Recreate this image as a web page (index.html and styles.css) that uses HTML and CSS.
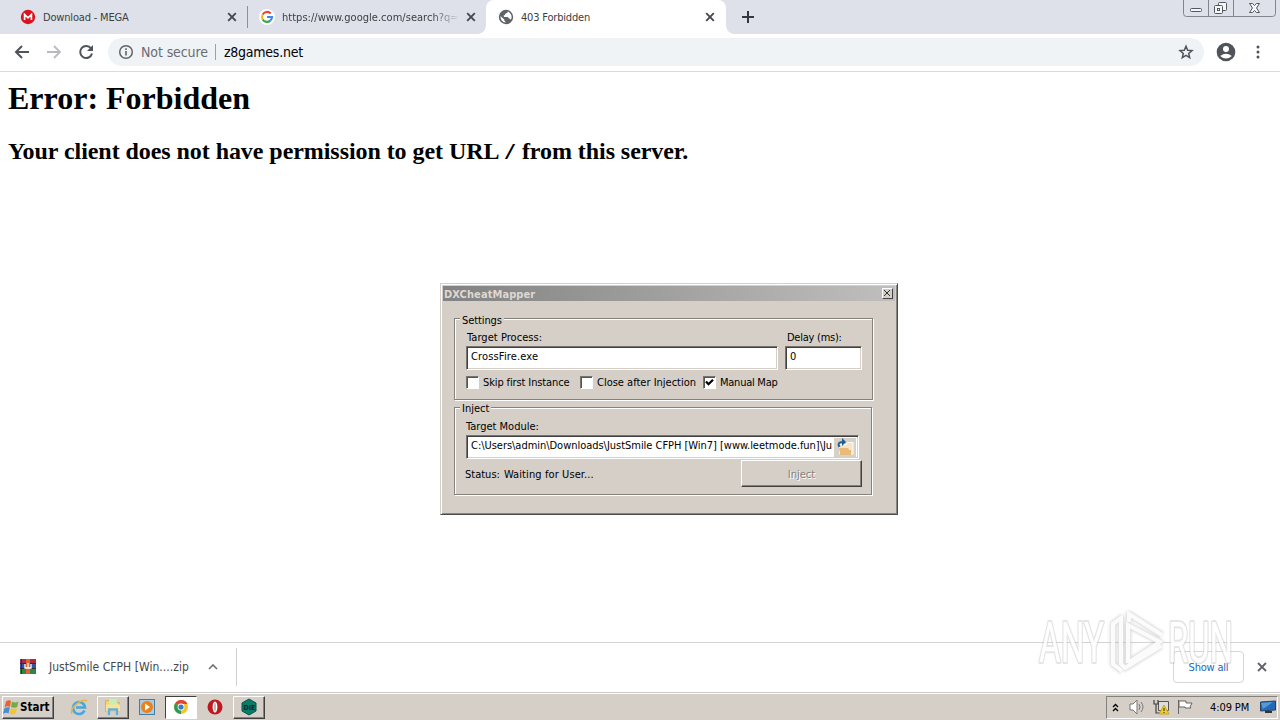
FILE: index.html
```html
<!DOCTYPE html>
<html lang="en">
<head>
<meta charset="utf-8">
<title>403 Forbidden</title>
<link rel="stylesheet" href="styles.css">
</head>
<body>
<header class="tabs">
  <div class="tab first">
    <svg class="fav" viewBox="0 0 16 16"><circle cx="8" cy="8" r="7.2" fill="#d9141e"/><path d="M4.6 11V5.5L8 8.8l3.4-3.3V11" fill="none" stroke="#fff" stroke-width="1.7"/></svg>
    <span class="label t1">Download - MEGA</span>
    <svg class="x" viewBox="0 0 10 10"><path d="M1.2 1.2l7.6 7.6m0-7.6L1.2 8.8"/></svg>
  </div>
  <div class="tab second">
    <svg class="fav" viewBox="0 0 16 16"><circle cx="8" cy="8" r="8" fill="#fff"/><g fill="none" stroke-width="2.2"><path d="M3.7 5.5A5 5 0 0 1 11.7 4.5" stroke="#ea4335"/><path d="M3.7 5.5a5 5 0 0 0 0 5" stroke="#fbbc05"/><path d="M3.7 10.5a5 5 0 0 0 7.6 1.2" stroke="#34a853"/><path d="M8 8h5a5 5 0 0 1-1.7 3.7" stroke="#4285f4"/></g></svg>
    <span class="label t2">https://www.google.com/search?q=</span>
    <svg class="x" viewBox="0 0 10 10"><path d="M1.2 1.2l7.6 7.6m0-7.6L1.2 8.8"/></svg>
  </div>
  <div class="tab active">
    <svg class="fav" viewBox="0 0 16 16"><circle cx="8" cy="8" r="7.2" fill="#5f6368"/><path d="M9.800 2.600Q9.800 4.500 7.500 4.600 7.300 6.400 5.600 6.600L6 8h3.500q1.300.2 1.300 1.600 1.500 0 2 1.200A5.600 5.600 0 0 0 9.800 2.600zM2.600 7.200L6.300 10.600V11.800q1.200.2 1.200 1.800A5.600 5.600 0 0 1 2.600 7.200z" fill="#fff"/></svg>
    <span class="label t3">403 Forbidden</span>
    <svg class="x" viewBox="0 0 10 10"><path d="M1.2 1.2l7.6 7.6m0-7.6L1.2 8.8"/></svg>
  </div>
  <svg class="plus" viewBox="0 0 12 12"><path d="M6 0v12M0 6h12" stroke="#34373c" stroke-width="2"/></svg>
  <svg class="controls" viewBox="0 0 94 18"><path d="M.5 0v13.500q0 3 3 3h86q3 0 3-3V0M25.500 0v16M50.500 0v16" fill="none" stroke="#80868e"/><g fill="#f4f6fa" stroke="#53575e"><rect x="7.500" y="8.500" width="11" height="3" rx="1"/><rect x="35.500" y="2.500" width="8" height="8" rx="1"/><rect x="31.500" y="5.500" width="8" height="8" rx="1"/><rect x="34.500" y="8.500" width="2" height="2"/><path d="M66.500 3.500h3l2 2 2-2h3L73.500 8l3 4.500h-3l-2-2-2 2h-3L69.500 8z"/></g></svg>
</header>
<nav class="toolbar">
  <svg class="back" viewBox="0 0 16 16"><path d="M15 8H2m6-6L2 8l6 6" fill="none" stroke="#505359" stroke-width="2"/></svg>
  <svg class="fwd" viewBox="0 0 16 16"><path d="M1 8h13M8 2l6 6-6 6" fill="none" stroke="#b8babd" stroke-width="1.800"/></svg>
  <svg class="reload" viewBox="0 0 16 16"><path d="M13 4.400A6 6 0 1 0 14 9.500" fill="none" stroke="#505359" stroke-width="2"/><path d="M15 1v6H9z" fill="#505359"/></svg>
  <div class="omnibox">
    <svg class="info" viewBox="0 0 16 16"><circle cx="8" cy="8" r="6.300" fill="none" stroke="#5f6368" stroke-width="1.500"/><path d="M8 7v4.500M8 4.300v1.600" stroke="#5f6368" stroke-width="1.600"/></svg>
    <span class="unsafe">Not secure</span><span class="bar"></span><span class="url">z8games.net</span>
    <svg class="star" viewBox="0 0 16 16"><path d="M8 2.200l1.700 4 4.300.4-3.300 2.800 1 4.200L8 11.400l-3.700 2.200 1-4.200L2 6.600l4.300-.4z" fill="none" stroke="#505359" stroke-width="1.500"/></svg>
  </div>
  <svg class="user" viewBox="0 0 20 20"><circle cx="10" cy="10" r="9.300" fill="#505359"/><circle cx="10" cy="7" r="3" fill="#fff"/><path d="M4.200 14Q10 9.500 15.800 14 10 19 4.200 14z" fill="#fff"/></svg>
  <svg class="dots" viewBox="0 0 4 14"><g fill="#505359"><circle cx="2" cy="2" r="1.500"/><circle cx="2" cy="7" r="1.500"/><circle cx="2" cy="12" r="1.500"/></g></svg>
</nav>
<main class="page">
  <h1>Error: Forbidden</h1>
  <h2>Your client does not have permission to get URL <code>/</code> from this server.</h2>
  <section class="dialog">
    <div class="titlebar"><span class="title">DXCheatMapper</span><span class="close"><svg viewBox="0 0 8 8"><path d="M1 1l6 6m0-6L1 7" stroke="#333" stroke-width="1"/></svg></span></div>
    <div class="group settings">
      <span class="legend lg1">Settings</span>
      <div class="fields">
        <div class="process"><label class="lp">Target Process:</label><div class="input"><span class="exe">CrossFire.exe</span></div></div>
        <div class="delay"><label class="ld">Delay (ms):</label><div class="input">0</div></div>
      </div>
      <div class="checks">
        <span class="box"></span><span class="c1">Skip first Instance</span>
        <span class="box"></span><span class="c2">Close after Injection</span>
        <span class="box"><svg viewBox="0 0 9 9"><path d="M1 3.500l2.500 2.700L8 1.700" fill="none" stroke="#000" stroke-width="2.200"/></svg></span><span class="c3">Manual Map</span>
      </div>
    </div>
    <div class="group inject">
      <span class="legend lg2">Inject</span>
      <label class="lm">Target Module:</label>
      <div class="input module"><span class="path">C:\Users\admin\Downloads\JustSmile CFPH [Win7] [www.leetmode.fun]\Ju</span>
        <svg class="open" viewBox="0 0 22 19"><rect width="22" height="19" fill="#d6d0c8"/><path d="M5.500 16V6.500H12l1.500-2H19V16z" fill="#f7e4c6" stroke="#fff"/><path d="M5 10h9l1 2h2v5H6z" fill="#eabb76"/><path d="M5.500 9Q2.500 4 9 4" fill="none" stroke="#205f91" stroke-width="2"/><path d="M8 0l4 4-4 4z" fill="#205f91"/></svg></div>
      <div class="bottom"><span class="status">Status:</span><span class="wait">Waiting for User...</span><span class="btn">Inject</span></div>
    </div>
  </section>
</main>
<footer class="downloads">
  <svg class="rar" viewBox="0 0 16 15"><path fill="#9c3158" d="M0 0h16v5H0z"/><path fill="#35579b" d="M0 5h16v5H0z"/><path fill="#2f8545" d="M0 10h16v5H0z"/><path d="M0 4.500h16M0 9.500h16M1.500 0v15" stroke="#322c35"/><path fill="#e5632a" d="M6 0h4v15H6z"/><path d="M5 5v4h6V5M8 4v5" fill="none" stroke="#fff" stroke-width="1.300"/><path fill="#b4292e" d="M12 0h3v4h-3z"/></svg>
  <span class="zip">JustSmile CFPH [Win....zip</span>
  <svg class="chev" viewBox="0 0 10 6"><path d="M1 5l4-4 4 4" fill="none" stroke="#6b6e72" stroke-width="1.600"/></svg>
  <span class="rule"></span>
  <span class="showall">Show all</span>
  <svg class="bx" viewBox="0 0 10 10"><path d="M1 1l8 8m0-8L1 9" stroke="#5f6368" stroke-width="1.800"/></svg>
  <svg class="watermark" viewBox="0 0 210 76">
    <path class="halo" d="M96 60V22l32 17-32 21M90 68l-9-7V21l8-6v46l4 4 36-22M97 19V11l33 21"/>
    <path class="core" d="M96 60V22l32 17-32 21M90 68l-9-7V21l8-6v46l4 4 36-22M97 19V11l33 21"/>
    <text x="7" y="59" textLength="65" lengthAdjust="spacingAndGlyphs">ANY</text><text x="136" y="59" textLength="65" lengthAdjust="spacingAndGlyphs">RUN</text>
  </svg>
</footer>
<div class="taskbar">
  <div class="start"><svg viewBox="0 0 16 15"><path d="M3 1.500q3-2 5-.5L7 7Q4.500 5.500 1.500 7.500z" fill="#eb6130"/><path d="M9 1.500q3 2 6.500 0l-1.300 5.500q-3 1.500-6.200 0z" fill="#70ad46"/><path d="M1.300 8.500q3-2 5.500-1l-1.300 6q-2.500-1.500-5.500.5z" fill="#468dd1"/><path d="M7.800 8q3 2 6.200 0l-1.300 5.500q-3 2-6.200 0z" fill="#f6c338"/></svg><b>Start</b></div>
  <span class="task"><svg viewBox="0 0 18 18"><path d="M14.500 12.500A6 6 0 1 1 15 9.500H6" fill="none" stroke="#46a8df" stroke-width="2.600"/><path d="M2 16C-1 10 12 0 17 3" fill="none" stroke="#e4b63d" stroke-width="1.500"/></svg></span>
  <span class="task raised"><svg viewBox="0 0 18 18"><path d="M1.500 2.500h5l1 2h8v9h-14z" fill="#f1d477" stroke="#d7b355"/><path d="M5 1h8v6H5z" fill="#c9edb6"/><path d="M2 6.500h14v7H2z" fill="#f8e39a"/><path d="M5 17v-5.500h8V17" fill="none" stroke="#69aed0" stroke-width="2.300"/></svg></span>
  <span class="task"><svg viewBox="0 0 18 18"><rect x="1.500" y="1.500" width="15" height="15" fill="#a9cbe3" stroke="#457da9"/><circle cx="9" cy="9" r="6" fill="#ed8119"/><path d="M7 5.500l5 3.500-5 3.500z" fill="#fff"/></svg></span>
  <span class="task pressed"><svg viewBox="0 0 18 18"><circle cx="9" cy="9" r="7" fill="#f3c431"/><path d="M9 9L3 5.500A7 7 0 0 1 15.500 6H9z" fill="#dd4637"/><path d="M3 5.500L9 9v7A7 7 0 0 1 3 5.500z" fill="#2c9b52"/><circle cx="9" cy="9" r="3.400" fill="#fff"/><circle cx="9" cy="9" r="2.600" fill="#3979cf"/></svg></span>
  <span class="task"><svg viewBox="0 0 18 18"><circle cx="9" cy="9" r="7.500" fill="#bd1a20"/><ellipse cx="9" cy="9" rx="2.400" ry="5.500" fill="#fff"/><ellipse cx="9" cy="9" rx=".8" ry="4.500" fill="#b6a7a7"/></svg></span>
  <span class="task raised"><svg viewBox="0 0 18 18"><path d="M9 1l7 4v8l-7 4-7-4V5z" fill="#087c68" stroke="#075347"/><text x="3.500" y="11.500" font-size="7" font-weight="bold" fill="#092e2b">DIE</text></svg></span>
  <div class="tray">
    <svg class="up2" viewBox="0 0 7 9"><path d="M1 4l2.500-2.500L6 4M1 8l2.500-2.500L6 8" fill="none" stroke="#000" stroke-width="1.300"/></svg>
    <svg class="snd" viewBox="0 0 16 16"><path d="M1 5h3l4-4v14l-4-4H1z" fill="#fff" stroke="#777"/><path d="M10 5q2 3 0 6m2-8q4 5 0 10" fill="none" stroke="#777"/></svg>
    <svg class="net" viewBox="0 0 17 16"><path d="M5.500 2.500h10v9h-10z" fill="#ddd" stroke="#555"/><path d="M1 1v4h4V1M3 5v9h4" fill="none" stroke="#444" stroke-width="1.200"/><path d="M11 6l5 9H6z" fill="#f4cd25" stroke="#cda519"/><path d="M11 9v3m0 1v1" stroke="#222"/></svg>
    <svg class="flag" viewBox="0 0 16 16"><path d="M1.500 1v14M2 2h7v2h6l-2 4 1 1H8V8H2z" fill="#fff" stroke="#666"/></svg>
    <span class="clock">4:09 PM</span>
    <svg class="desk" viewBox="0 0 16 14"><path d="M.5 2l15-1v9l-15 1z" fill="#2468b8" stroke="#244367"/><path d="M1 3l12-1L3 9z" fill="#5898d9"/><path d="M5 12h7" stroke="#333" stroke-width="2"/></svg>
  </div>
</div>
</body>
</html>
```
FILE: styles.css
```css
*{box-sizing:border-box}
body{margin:0;width:1280px;height:720px;display:flex;flex-direction:column;overflow:hidden;background:#fff;font:11px/14px "DejaVu Sans Condensed","DejaVu Sans",sans-serif;font-stretch:condensed;color:#000}
svg{display:block;flex:none}
span,label{white-space:nowrap}
.tabs{height:34px;background:#dee1e9;display:flex;flex:none}
.tab{height:34px;display:flex;align-items:center;color:#3c4043;position:relative}
.first{width:248px;padding-left:20px;border-right:1px solid #8b8f96;background:#dee1e9;border-image:linear-gradient(#dee1e9 7px,#8b8f96 7px,#8b8f96 27px,#dee1e9 27px) 1}
.second{width:238px;padding-left:11px}
.active{width:240px;padding-left:12px;background:#fff;border-radius:8px 8px 0 0}
.active:before,.active:after{content:"";position:absolute;bottom:0;width:8px;height:8px}
.active:before{left:-8px;background:radial-gradient(circle at 0 0,#dee1e9 7.5px,#fff 8px)}
.active:after{right:-8px;background:radial-gradient(circle at 100% 0,#dee1e9 7.5px,#fff 8px)}
.fav{width:16px;height:16px}
.label{margin-left:7px;padding-top:1px;overflow:hidden;letter-spacing:-.18px}
.second .label{width:177px;letter-spacing:.03px;-webkit-mask-image:linear-gradient(90deg,#000 150px,transparent)}
.x{width:10px;height:10px;margin-left:auto;margin-right:10px}
.active .x{margin-right:11px}
.x path{stroke:#45494f;stroke-width:1.9}
.plus{width:12px;height:12px;margin:11px 0 0 16px}
.controls{width:94px;height:18px;margin-left:auto;margin-right:3px}
.toolbar{height:38px;display:flex;align-items:center;padding-bottom:1px;border-bottom:1px solid #d9dcde;flex:none}
.back,.fwd,.reload{width:16px;height:16px;margin-left:14px}
.fwd,.reload{margin-left:16px}
.omnibox{margin-left:14px;width:1096px;height:28px;border-radius:14px;background:#f0f3f6;display:flex;align-items:center;padding-left:10px;font-size:14px}
.info,.star{width:16px;height:16px}
.unsafe{margin-left:7px;width:67px;color:#686c71;letter-spacing:-.1px}
.url{letter-spacing:-.25px}
.bar{height:16px;width:1px;background:#9da1a5;margin:0 8px 0 7px}
.star{margin-left:auto;margin-right:10px}
.user{width:20px;height:20px;margin-left:12px}
.dots{width:4px;height:14px;margin-left:20px}
.page{height:570px;flex:none;padding:8px;position:relative;font-family:"Liberation Serif",serif}
h1{margin:0;font-size:32px;line-height:37px}
h2{margin:20px 0 0;font-size:24px;line-height:28px;letter-spacing:-.06px}
code{font-family:"Liberation Mono",monospace;font-size:20px}
.dialog{position:absolute;left:440px;top:211px;width:458px;height:232px;padding:2px;background:#d5cfc8;border:1px solid;border-color:#d5cfc8 #4b4c4c #4b4c4c #d5cfc8;box-shadow:inset 1px 1px #fff,inset -1px -1px #8a8783;font-family:"DejaVu Sans Condensed","DejaVu Sans",sans-serif}
.titlebar{height:15px;display:flex;align-items:center;justify-content:space-between;background:linear-gradient(90deg,#828282,#c0bfbd);color:#ddd8d1}
.title{font-weight:bold;padding:2px 0 0 1px;letter-spacing:.08px}
.close{width:11px;height:11px;margin-right:2px;background:#d5cfc8;border:1px solid;border-color:#fff #444 #444 #fff}
.close svg{width:8px;height:8px}
.group{position:relative;margin-left:11px;border:1px solid #85817c;box-shadow:1px 1px #fff,inset 1px 1px #fff}
.settings{width:419px;height:82px;margin-top:17px;padding:11px 10px 0 11px}
.legend{position:absolute;left:5px;top:-6px;padding:0 2px;background:#d5cfc8}
.lg1{letter-spacing:-.1px;top:-5px}
.fields{display:flex;justify-content:space-between}
.fields label{display:block;height:16px;padding-top:1px}
.lp{padding-left:1px;letter-spacing:.05px}
.ld{margin-left:2px;letter-spacing:-.25px}
.process{width:312px}.delay{width:77px}
.input{height:24px;padding:3px 4px;background:#fff;border:1px solid;border-color:#77736e #fff #fff #77736e;box-shadow:inset 1px 1px #404040,inset -1px -1px #d5cfc8}
.exe{letter-spacing:.15px}
.checks{height:22px;display:flex;align-items:center;margin-top:1px}
.box{width:13px;height:13px;background:#fff;border:1px solid;border-color:#77736e #fff #fff #77736e;box-shadow:inset 1px 1px #555}
.box svg{width:9px;height:9px;margin:1px}
.c1,.c2,.c3{padding-top:1px}
.c1{margin-left:4px;width:97px;letter-spacing:-.12px}.c2{margin-left:4px;width:106px}.c3{margin-left:4px;letter-spacing:-.25px}
.inject{width:418px;height:88px;margin-top:7px;padding:11px 9px 0 10px}
.inject>label{display:block;height:16px;padding:1px 0 0 1px}
.module{width:393px;margin-left:1px;display:flex;position:relative}
.path{letter-spacing:-.03px}
.open{width:22px;height:19px;margin:-1px -2px 0 auto}
.bottom{display:flex;align-items:center;margin-top:1px}
.status,.wait{padding:3px 0 0}
.wait{margin-left:4px;letter-spacing:.1px}
.btn{margin-left:auto;width:121px;height:27px;text-align:center;line-height:27px;color:#85817c;text-shadow:1px 1px #fff;border:1px solid;border-color:#fff #404040 #404040 #fff;box-shadow:inset -1px -1px #85817c}
.downloads{height:50px;flex:none;border-top:1px solid #d3d4d5;display:flex;align-items:center;padding:0 0 2px 20px;position:relative;color:#45484c}
.rar{width:16px;height:15px}
.zip{font-size:12px;margin-left:13px;width:140px;letter-spacing:.04px}
.chev{width:10px;height:6px;margin-left:19px}
.rule{width:1px;height:38px;background:#cfcfcf;margin-left:18px}
.showall{width:71px;height:32px;margin-left:auto;border:1px solid #d5d6d8;border-radius:4px;text-align:center;line-height:31px;color:#2268b8;letter-spacing:-.2px}
.bx{width:10px;height:10px;margin:0 13px}
.watermark{position:absolute;left:1032px;top:-40px;width:210px;height:76px;overflow:visible;font:400 56px Roboto,sans-serif}
.watermark path{fill:none}
.watermark text{fill:#fff;stroke:#bbb;stroke-opacity:.42;stroke-width:4;stroke-linejoin:round;paint-order:stroke;opacity:.9}
.halo{stroke:#bbb;stroke-width:7;stroke-linejoin:round;opacity:.45;filter:blur(1px)}
.core{stroke:#fff;stroke-width:4;opacity:.85}
.taskbar{height:28px;flex:none;background:#d5cfc8;border-top:1px solid #c8c9c9;box-shadow:inset 0 1px #fff;display:flex;align-items:center;padding:1px 2px 0}
.start{height:23px;width:52px;display:flex;align-items:center;border:1px solid;border-color:#fff #404040 #404040 #fff;box-shadow:inset -1px -1px #85817c}
.start svg{width:16px;height:15px;margin:0 1px 0 0}
.start b{font-size:11.5px}
.task{width:32px;height:23px;margin-left:2px;display:flex;align-items:center;justify-content:center;border:1px solid transparent}
.start+.task{margin-left:9px}
.task svg{width:18px;height:18px}
.raised{border-color:#fff #404040 #404040 #fff;box-shadow:inset -1px -1px #85817c}
.pressed{background:#fff;border-color:#404040 #fff #fff #404040}
.tray{width:172px;height:23px;margin-left:auto;border:1px solid;border-color:#85817c #fff #fff #85817c;display:flex;align-items:center;padding-left:5px}
.up2{width:7px;height:9px}.snd{width:16px;height:16px;margin-left:10px}.net{width:17px;height:16px;margin-left:8px}.flag{width:16px;height:16px;margin-left:7px}.clock{margin-left:17px;width:40px;padding-top:1px;letter-spacing:-.1px}.desk{width:16px;height:14px;margin-left:10px}
```
